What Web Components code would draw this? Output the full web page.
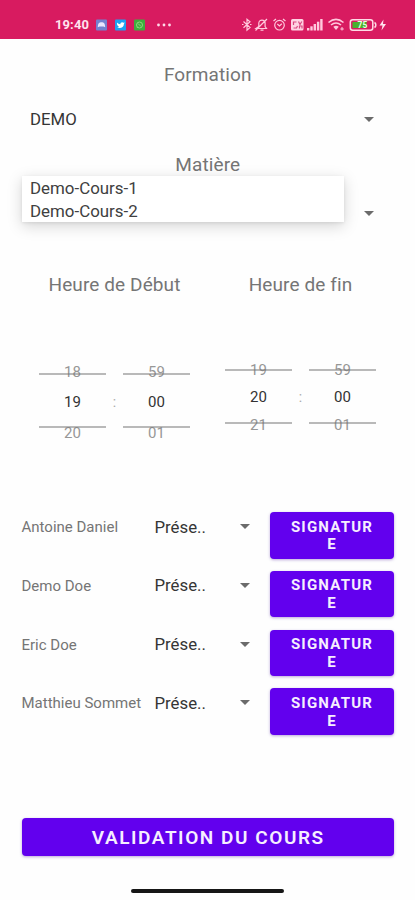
<!DOCTYPE html>
<html lang="fr">
<head>
<meta charset="utf-8">
<meta name="viewport" content="width=device-width, initial-scale=1">
<title>Validation du cours</title>
<style>
    body {
        margin: 0;
        background: #fefefe;
        font-family: Roboto, "Liberation Sans", sans-serif;
        color: #757575;
    }

    attendance-screen {
        --accent: #6200ee;
        --status: #d81b60;
    }
</style>
</head>
<body>
<attendance-screen></attendance-screen>

<template id="status-bar">
    <style>
        :host {
            display: flex;
            box-sizing: border-box;
            height: 39px;
            padding: 10px 22px 0 55px;
            align-items: center;
            justify-content: space-between;
            background: var(--status);
            color: #ffe3ee;
        }
        div { display: flex; align-items: center; }
        time { font-size: 13px; font-weight: 700; letter-spacing: .1px; width: 41px; white-space: nowrap; }
        svg { display: block; }
    </style>
    <div>
        <time>19:40</time>
        <svg width="78" height="14" viewBox="0 0 78 14">
            <rect y="1.5" width="11" height="11" rx="1" fill="#7381d0"/>
            <path d="M1.800 9.200C2 5 3.200 4.200 5.500 4.200S9 5 9.200 9.200L7.500 8.500h-4z" fill="#e9e6ff"/>
            <rect x="19" y="1.500" width="11" height="11" rx="1" fill="#1da1f2"/>
            <path d="M21 4.500c1 1.200 2 1.700 3.300 1.700C24.200 4.200 26.500 3.600 27.400 4.700l1.300-.3-.8 1.500c0 3.400-3.800 5.100-6.900 3.400.9 0 1.500-.2 2-.6C21.400 8 20.700 6.400 21 4.500z" fill="#fff"/>
            <rect x="38" y="1.500" width="11" height="11" rx="1" fill="#3fae3d"/>
            <circle cx="43.500" cy="7" r="3" fill="none" stroke="#8fd67e" stroke-width="1"/>
            <path d="M42 5.500l3 3M41 9.800l1-1" stroke="#8fd67e"/>
            <g fill="#ffd9e8"><circle cx="62.500" cy="7" r="1.400"/><circle cx="68" cy="7" r="1.400"/><circle cx="73.500" cy="7" r="1.400"/></g>
        </svg>
    </div>
    <svg width="152" height="16" viewBox="0 0 152 16" fill="none" stroke="#ffc9dd" stroke-width="1.200">
        <path d="M2.500 4.500l6.500 6-3 2.700V2.200l3 2.600-6.500 6M1 7.500h1.500M9 7.500h1.500"/>
        <path d="M15 11.500h10.500l-1.400-2V6.200c0-4.200-6.300-4.200-6.300 0v3.300zM19.500 13.200h3M14.500 13.500L26 2"/>
        <circle cx="38.500" cy="8.200" r="4.800"/>
        <path d="M36.300 7l2.200 2 2.300-2.200M32.500 4l2.500-2M44.500 4L42 2"/>
        <rect x="50" y="2" width="12.500" height="11.500" rx="1.500" fill="#ffd3e3" stroke="none"/>
        <path d="M52.500 8V5h3M57.500 4.500l1.500 3 1.800-3M52.500 11h3l1-2M58.500 11.500V9h2.500v2.500" stroke="#d94780"/>
        <g fill="#ffc9dd" stroke="none">
            <rect x="66" y="11" width="2.400" height="2.500"/>
            <rect x="69.300" y="9.300" width="2.400" height="4.200"/>
            <rect x="72.600" y="7" width="2.400" height="6.500"/>
            <rect x="75.900" y="4.700" width="2.400" height="8.800"/>
            <rect x="79.200" y="2" width="2.400" height="11.500"/>
        </g>
        <path d="M87.500 5.500c4.700-4 10.300-4 15 0M90 8c3.300-2.700 6.700-2.700 10 0" stroke-width="1.600"/>
        <path d="M92.300 9.700c2-1.300 3.500-1.300 5.500 0L95 13z" fill="#ffc9dd" stroke="none"/>
        <path d="M101 10v3.500M99.300 12h3.500" stroke-width="1"/>
        <rect x="109.300" y="2.700" width="22.500" height="10.600" rx="2.500" stroke="#ffdbe6" stroke-width="1.500"/>
        <path d="M133.500 5.500c1.800 1 1.800 4 0 5" stroke="#ffdbe6" stroke-width="1.500"/>
        <rect x="111.500" y="5" width="14" height="6" fill="#48b12d" stroke="none"/>
        <text x="116.500" y="11" font-size="8.500" font-weight="700" fill="#e8ffe0" stroke="none">75</text>
        <path d="M142.500 2.500l-4 6h3l-1 5 4.500-6.500h-3z" fill="#ffe3ee" stroke="none"/>
    </svg>
</template>

<template id="spinner-select">
    <style>
        :host {
            display: flex;
            align-items: center;
            justify-content: space-between;
            font-size: 16.800px;
            color: #353535;
        }
        i {
            border: 5px solid transparent;
            border-top-color: #6b6b6b;
            border-bottom: 0;
        }
    </style>
    <span><slot></slot></span><i></i>
</template>

<template id="option-popup">
    <style>
        :host {
            display: block;
            box-sizing: border-box;
            height: 46px;
            padding-top: 1px;
            background: #fff;
            box-shadow: 0 4px 14px rgba(0, 0, 0, .17), 0 1px 3px rgba(0, 0, 0, .08);
            color: #404040;
            font-size: 16.900px;
            line-height: 23px;
        }
        ::slotted(div) { padding-left: 8.500px; }
    </style>
    <slot></slot>
</template>

<template id="number-wheel">
    <style>
        :host {
            display: flex;
            flex-direction: column;
            align-items: center;
            width: 67px;
            font-size: 15px;
            line-height: 16px;
        }
        span { opacity: .75; height: 16px; }
        b {
            display: grid;
            place-items: center;
            box-sizing: border-box;
            width: 100%;
            height: 55px;
            padding-top: var(--value-shift, 3px);
            border: solid #b9b9b9;
            border-width: 2px 0;
            font-weight: 400;
            color: #333;
        }
        .prev { margin-bottom: var(--prev-overlap, -6.500px); }
        .next { margin-top: var(--next-overlap, -3.500px); }
    </style>
    <span class="prev"></span>
    <b></b>
    <span class="next"></span>
</template>

<template id="time-wheels">
    <style>
        :host { display: flex; width: 151px; justify-content: space-between; }
        i { font-style: normal; font-size: 14px; line-height: 16px; padding-top: var(--colon-top, 30.500px); color: #aaa; }
    </style>
    <number-wheel class="h"></number-wheel>
    <i>:</i>
    <number-wheel class="m"></number-wheel>
</template>

<template id="action-button">
    <style>
        :host { display: block; }
        button {
            display: block;
            width: 100%;
            height: 100%;
            padding: var(--pad, 0);
            border: 0;
            border-radius: 4px;
            background: var(--accent);
            box-shadow: 0 1px 3px rgba(60, 0, 150, .35);
            color: #f6eeff;
            font: inherit;
            letter-spacing: inherit;
            word-break: break-all;
        }
    </style>
    <button><slot></slot></button>
</template>

<template id="student-row">
    <style>
        :host {
            display: grid;
            grid-template-columns: 133px 115.500px 124px;
            height: 46.500px;
            align-items: start;
        }
        .name { font-size: 15px; line-height: 31px; white-space: nowrap; }
        spinner-select { height: 29px; padding-right: 20px; }
        action-button { height: 46.500px; font-size: 15px; font-weight: 700; line-height: 17.600px; letter-spacing: 1.200px; --pad: 2px 18px 0; }
    </style>
    <span class="name"><slot></slot></span>
    <spinner-select>Prése..</spinner-select>
    <action-button>SIGNATURE</action-button>
</template>

<template id="attendance-screen">
    <style>
        :host { display: flex; flex-direction: column; height: 900px; overflow: hidden; }
        h2 { margin: 0 0 -1px; padding-top: 1px; font-size: 19px; line-height: 24px; font-weight: 400; text-align: center; letter-spacing: .1px; }
        main { padding: 23px 21px 0 21.500px; }
        .field { height: 24px; padding: 0 20px 0 8.500px; }
        .formation { margin: 21px 0; }
        .matiere { position: relative; height: 73px; }
        .matiere .field { margin-top: 25px; }
        option-popup { position: absolute; left: 0; top: 24px; width: 322px; }
        .times { display: grid; grid-template-columns: 186px 186px; margin-top: 47px; height: 240px; }
        .times time-wheels { margin: 67.500px 0 0 17.500px; }
        .times .end { margin-top: 65.500px; --prev-overlap: -8.500px; --next-overlap: -7.500px; --colon-top: 27.500px; --value-shift: 1px; }
        .rows { display: grid; row-gap: 12.300px; }
        student-row { grid-template-columns: 133px 115.500px 124px; }
        .submit { height: 38px; margin-top: 83px; font-size: 19px; font-weight: 600; letter-spacing: 1.550px; --pad: 2px 0 0 1px; }
        .home { width: 153px; height: 4px; margin: 33.500px auto 0; border-radius: 2px; background: #161616; }
    </style>
    <status-bar></status-bar>
    <main>
        <h2>Formation</h2>
        <spinner-select class="field formation">DEMO</spinner-select>
        <section class="matiere">
            <h2>Matière</h2>
            <spinner-select class="field"></spinner-select>
            <option-popup>
                <div>Demo-Cours-1</div>
                <div>Demo-Cours-2</div>
            </option-popup>
        </section>
        <section class="times">
            <div>
                <h2>Heure de Début</h2>
                <time-wheels hours="18,19,20" minutes="59,00,01"></time-wheels>
            </div>
            <div>
                <h2>Heure de fin</h2>
                <time-wheels class="end" hours="19,20,21" minutes="59,00,01"></time-wheels>
            </div>
        </section>
        <section class="rows">
            <student-row>Antoine Daniel</student-row>
            <student-row>Demo Doe</student-row>
            <student-row>Eric Doe</student-row>
            <student-row>Matthieu Sommet</student-row>
        </section>
        <action-button class="submit">VALIDATION DU COURS</action-button>
        <div class="home"></div>
    </main>
</template>

<script>
    // Clones the template that has the same id as the tag
    class TemplateElement extends HTMLElement {
        constructor() {
            super();
            const template = document.getElementById(this.localName);
            this.attachShadow({ mode: "open" }).appendChild(template.content.cloneNode(true));
        }
    }

    class NumberWheel extends TemplateElement {
        static get observedAttributes() {
            return ["values"];
        }
        attributeChangedCallback(name, old, value) {
            const [prev, current, next] = value.split(",");
            this.shadowRoot.querySelector(".prev").textContent = prev;
            this.shadowRoot.querySelector("b").textContent = current;
            this.shadowRoot.querySelector(".next").textContent = next;
        }
    }

    class TimeWheels extends TemplateElement {
        connectedCallback() {
            this.shadowRoot.querySelector(".h").setAttribute("values", this.getAttribute("hours"));
            this.shadowRoot.querySelector(".m").setAttribute("values", this.getAttribute("minutes"));
        }
    }

    customElements.define("number-wheel", NumberWheel);
    customElements.define("time-wheels", TimeWheels);
    customElements.define("status-bar", class extends TemplateElement {});
    customElements.define("spinner-select", class extends TemplateElement {});
    customElements.define("option-popup", class extends TemplateElement {});
    customElements.define("action-button", class extends TemplateElement {});
    customElements.define("student-row", class extends TemplateElement {});
    customElements.define("attendance-screen", class extends TemplateElement {});
</script>
</body>
</html>
